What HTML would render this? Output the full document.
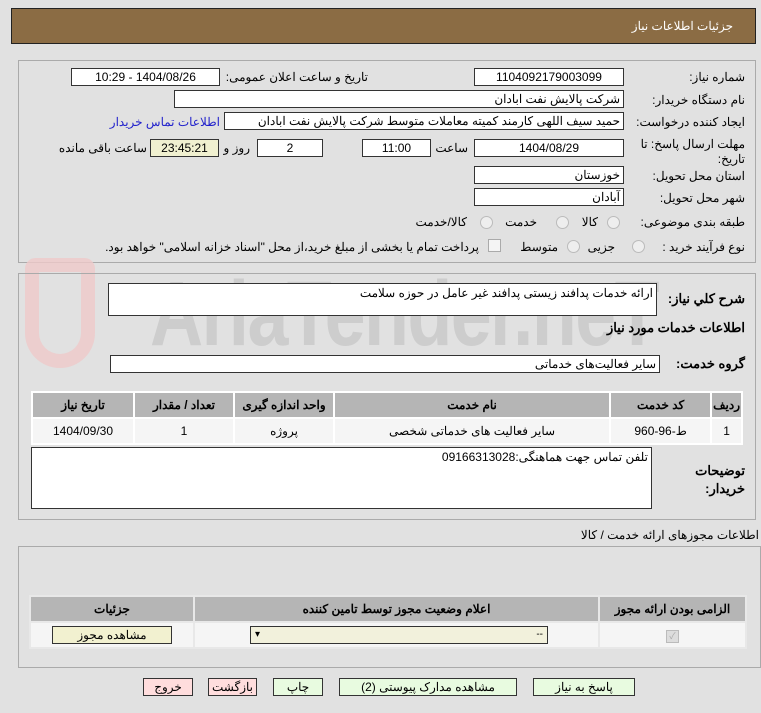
<!DOCTYPE html>
<html><head><meta charset="utf-8"><style>
body{margin:0;width:761px;height:713px;background:#e1e1e1;font-family:Tahoma,"Liberation Sans","Noto Sans CJK SC",sans-serif;font-size:12px;color:#000;position:relative;overflow:hidden}
.a{position:absolute}
.box{position:absolute;background:#fff;border:1px solid #333;box-sizing:border-box;direction:rtl;padding:0 3px;line-height:16px;white-space:nowrap;overflow:hidden}
.c{text-align:center}
.l{position:absolute;direction:rtl;white-space:nowrap;text-align:right}
.panel{position:absolute;border:1px solid #aaa;box-sizing:border-box}
.rad{position:absolute;width:11px;height:11px;border-radius:50%;border:1px solid #bbb;background:#eee}
table{border-collapse:separate;border-spacing:2px;position:absolute;direction:rtl;background:#fff}
th{background:#b5b5b5;font-weight:bold;height:22px;font-size:12px}
td{background:#f5f5f5;height:22px;text-align:center}
.btn{position:absolute;border:1px solid #333;box-sizing:border-box;text-align:center;line-height:16px;height:18px;background:#e8fbe0}
</style></head><body>
<div class="a" style="left:11px;top:8px;width:745px;height:36px;background:#8b6c44;border:1px solid #222;box-sizing:border-box"></div>
<div class="l" style="right:28px;top:19px;color:#fff;font-size:12px">جزئیات اطلاعات نیاز</div>

<div class="panel" style="left:18px;top:60px;width:738px;height:203px"></div>
<div class="a" style="left:150px;top:262px;font-size:92px;color:#cdcdcd;font-family:'Liberation Sans',sans-serif;letter-spacing:-2px;transform:scaleX(0.8);transform-origin:left;font-weight:bold">AriaTender.neT</div>
<div class="a" style="left:25px;top:258px;width:70px;height:110px;border:14px solid #efc9c9;border-radius:12px 12px 40px 40px;box-sizing:border-box;opacity:.8"></div>

<div class="l" style="right:16px;top:70px">شماره نیاز:</div>
<div class="box c" style="left:474px;top:68px;width:150px;height:18px">1104092179003099</div>
<div class="l" style="right:393px;top:70px">تاریخ و ساعت اعلان عمومی:</div>
<div class="box c" style="left:71px;top:68px;width:149px;height:18px">1404/08/26 - 10:29</div>

<div class="l" style="right:16px;top:93px">نام دستگاه خریدار:</div>
<div class="box" style="left:174px;top:90px;width:450px;height:18px">شرکت پالایش نفت ابادان</div>

<div class="l" style="right:16px;top:115px">ایجاد کننده درخواست:</div>
<div class="box" style="left:224px;top:112px;width:400px;height:18px">حمید سیف اللهی کارمند کمیته معاملات متوسط  شرکت پالایش نفت ابادان</div>
<div class="l" style="right:541px;top:115px;color:#2222cc">اطلاعات تماس خریدار</div>

<div class="l" style="right:16px;top:137px;line-height:15px">مهلت ارسال پاسخ: تا<br>تاریخ:</div>
<div class="box c" style="left:474px;top:139px;width:150px;height:18px">1404/08/29</div>
<div class="l" style="right:293px;top:141px">ساعت</div>
<div class="box c" style="left:362px;top:139px;width:69px;height:18px">11:00</div>
<div class="box c" style="left:257px;top:139px;width:66px;height:18px">2</div>
<div class="l" style="right:511px;top:141px">روز و</div>
<div class="box c" style="left:150px;top:139px;width:69px;height:18px;background:#f0f0d0">23:45:21</div>
<div class="l" style="right:614px;top:141px">ساعت باقی مانده</div>

<div class="l" style="right:16px;top:169px">استان محل تحویل:</div>
<div class="box" style="left:474px;top:166px;width:150px;height:18px">خوزستان</div>
<div class="l" style="right:16px;top:191px">شهر محل تحویل:</div>
<div class="box" style="left:474px;top:188px;width:150px;height:18px">آبادان</div>

<div class="l" style="right:16px;top:215px">طبقه بندی موضوعی:</div>
<div class="rad" style="left:607px;top:216px"></div><div class="l" style="right:163px;top:215px">کالا</div>
<div class="rad" style="left:556px;top:216px"></div><div class="l" style="right:224px;top:215px">خدمت</div>
<div class="rad" style="left:480px;top:216px"></div><div class="l" style="right:294px;top:215px">کالا/خدمت</div>

<div class="l" style="right:16px;top:240px">نوع فرآیند خرید :</div>
<div class="rad" style="left:632px;top:240px"></div><div class="l" style="right:146px;top:240px">جزیی</div>
<div class="rad" style="left:567px;top:240px"></div><div class="l" style="right:203px;top:240px">متوسط</div>
<div class="a" style="left:488px;top:239px;width:11px;height:11px;border:1px solid #aaa;background:#f4f4f4"></div>
<div class="l" style="right:282px;top:240px">پرداخت تمام یا بخشی از مبلغ خرید،از محل "اسناد خزانه اسلامی" خواهد بود.</div>

<div class="panel" style="left:18px;top:273px;width:738px;height:247px"></div>
<div class="l" style="right:16px;top:291px;font-weight:bold;font-size:13px">شرح کلي نياز:</div>
<div class="box" style="left:108px;top:283px;width:549px;height:33px;line-height:18px">ارائه خدمات پدافند زیستی پدافند غیر عامل در حوزه سلامت</div>
<div class="l" style="right:16px;top:320px;font-weight:bold;font-size:13px">اطلاعات خدمات مورد نیاز</div>
<div class="l" style="right:16px;top:356px;font-weight:bold;font-size:13px">گروه خدمت:</div>
<div class="box" style="left:110px;top:355px;width:550px;height:18px">سایر فعالیت‌های خدماتی</div>

<table style="left:31px;top:391px;width:712px">
<tr><th style="width:23px">ردیف</th><th style="width:97px">کد خدمت</th><th>نام خدمت</th><th style="width:96px">واحد اندازه گیری</th><th style="width:96px">تعداد / مقدار</th><th style="width:98px">تاریخ نیاز</th></tr>
<tr><td>1</td><td>ط-96-960</td><td>سایر فعالیت های خدماتی شخصی</td><td>پروژه</td><td>1</td><td>1404/09/30</td></tr>
</table>

<div class="l" style="right:16px;top:462px;font-weight:bold;font-size:13px;line-height:18px">توضیحات<br>خریدار:</div>
<div class="box" style="left:31px;top:447px;width:621px;height:62px;line-height:18px">تلفن تماس جهت هماهنگی:09166313028</div>

<div class="l" style="right:2px;top:528px">اطلاعات مجوزهای ارائه خدمت / کالا</div>
<div class="panel" style="left:18px;top:546px;width:743px;height:122px"></div>
<table style="left:29px;top:595px;width:718px;background:#e8e8e8">
<tr><th style="width:143px">الزامی بودن ارائه مجوز</th><th>اعلام وضعیت مجوز توسط تامین کننده</th><th style="width:160px">جزئیات</th></tr>
<tr><td><span style="display:inline-block;width:11px;height:11px;border:1px solid #bbb;background:#ddd;color:#aaa;font-size:9px;line-height:11px">✓</span></td>
<td><div style="margin:0 auto 0 54px;width:298px;height:18px;border:1px solid #333;background:#f2f1dc;box-sizing:border-box;display:flex;justify-content:space-between;padding:0 4px;line-height:16px;font-size:10px"><span>--</span><span>▾</span></div></td>
<td><div style="margin:0 auto;width:120px;height:18px;border:1px solid #333;background:#f2f1d0;box-sizing:border-box;line-height:16px">مشاهده مجوز</div></td></tr>
</table>

<div class="btn" style="left:533px;top:678px;width:102px">پاسخ به نیاز</div>
<div class="btn" style="left:339px;top:678px;width:178px">مشاهده مدارک پیوستی (2)</div>
<div class="btn" style="left:273px;top:678px;width:50px">چاپ</div>
<div class="btn" style="left:208px;top:678px;width:49px;background:#fdd">بازگشت</div>
<div class="btn" style="left:143px;top:678px;width:50px;background:#fdd">خروج</div>
</body></html>
